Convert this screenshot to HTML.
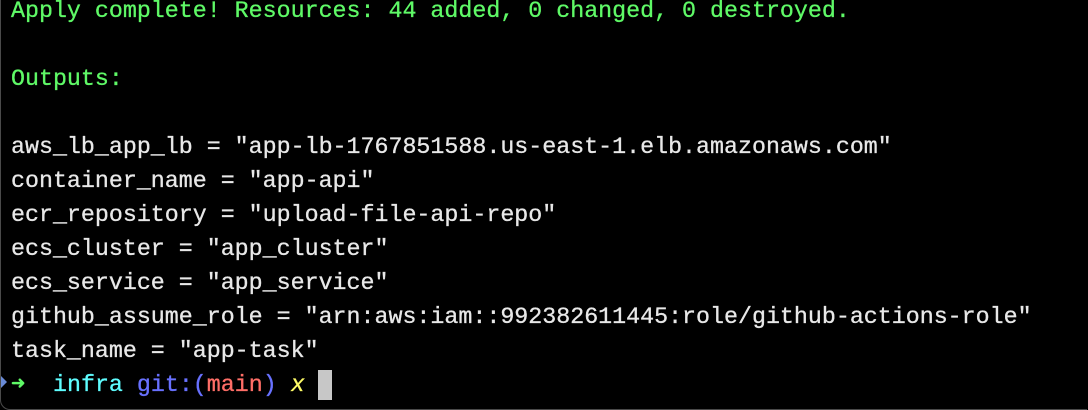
<!DOCTYPE html>
<html><head><meta charset="utf-8"><style>
html,body{margin:0;padding:0;background:#000;}
body{width:1088px;height:410px;overflow:hidden;position:relative;}
.t{position:absolute;left:0;top:0;width:1086px;height:409px;border-left:1px solid #4a4a4a;border-bottom:1px solid #4a4a4a;border-radius:0 0 0 10px;}
pre{margin:0;position:absolute;left:11px;top:-6px;font-family:"Liberation Mono",monospace;font-size:23.3px;line-height:34px;color:#e8e8e8;-webkit-text-stroke:0.3px currentColor;}
.g{color:#5ff967}
.c{color:#5ffdff}
.b{color:#6871ff}
.r{color:#ff6e67}
.y{color:#fefb67;font-style:italic}
.cur{position:absolute;left:318px;top:370px;width:14px;height:30px;background:#c7c7c7}
.mk{position:absolute;left:1px;top:376px;width:0;height:0;border-top:6px solid transparent;border-bottom:6px solid transparent;border-left:6px solid #6a8bd6}
</style></head><body><div class="t"></div>
<pre><span class="g">Apply complete! Resources: 44 added, 0 changed, 0 destroyed.</span>

<span class="g">Outputs:</span>

aws_lb_app_lb = "app-lb-1767851588.us-east-1.elb.amazonaws.com"
container_name = "app-api"
ecr_repository = "upload-file-api-repo"
ecs_cluster = "app_cluster"
ecs_service = "app_service"
github_assume_role = "arn:aws:iam::992382611445:role/github-actions-role"
task_name = "app-task"
<span class="g">➜</span>  <span class="c">infra</span> <span class="b">git:(</span><span class="r">main</span><span class="b">)</span> <span class="y">x</span></pre>
<div class="mk"></div><div class="cur"></div>
</body></html>
